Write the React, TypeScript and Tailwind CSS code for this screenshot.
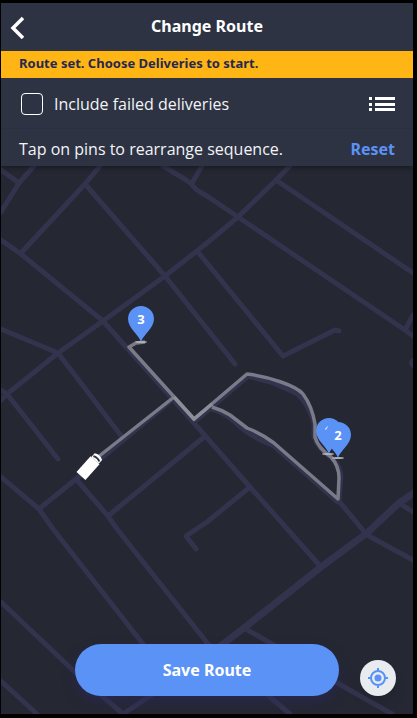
import React from "react";

const minorRoads = [
  "M1 170 19 183",
  "M34 166 19 183 1 212",
  "M100 166 85 184 21 253",
  "M1 240 21 254 103 321 194 423 250 487 290 532 321 567",
  "M85 184 165 276 235 364",
  "M198 252 283 356 335 330 339 331",
  "M163 166 186 180Q190 182 193 186T200 192L210 198 238 217 405 330 413 336",
  "M202 166 192 183",
  "M290 166 276 180 238 217 207 243 165 276 103 321 58 353 7 394 1 400",
  "M276 180 413 273",
  "M413 315 405 330",
  "M1 329 58 353 122 437",
  "M1 390 7 394 58 459",
  "M1 477 39 509 53 529 143 644",
  "M174 398 76 479 39 509",
  "M76 479 108 516 117 529 208 644 290 714",
  "M108 516 204 437",
  "M1 602 76 673 123 714 153 694 219 646",
  "M1 681 37 714",
  "M244 628 272 644 339 684 392 714",
  "M338 500 367 535 413 560",
  "M250 487 207 522 186 536 196 549",
  "M399 503 413 512",
  "M194 422 248 376 271 382 296 393Q308 402 314 423V437Q318 449 333 459 340 467 341 476L339 500",
  "M212 409Q226 413 237 424T274 446L338 502",
];

const routeLine =
  "M145 342 136 343 129 347 194 419 247 374Q264 376 281 382T303 394Q312 406 315 424V437Q318 448 331 457 339 466 339 478L338 499 274 443Q262 434 247 428L230 415Q222 410 212 407";

function Pin({ x, y, label }: { x: number; y: number; label: string }) {
  return (
    <g transform={`translate(${x} ${y})`}>
      <ellipse cx="0" cy="0" rx="6" ry="1" fill="#b0b1b8" />
      <path
        d="M0 0C-2-7-13-14-13-23A13 13 0 0 1 13-23C13-14 2-7 0 0Z"
        fill="#5b92f5"
      />
      <text
        y="-18"
        textAnchor="middle"
        className="fill-white font-['Noto_Sans',sans-serif] text-[13px] font-bold"
      >
        {label}
      </text>
    </g>
  );
}

function RouteMap() {
  return (
    <svg
      className="block h-auto w-full"
      viewBox="1 166 412 548"
      role="img"
      aria-label="Delivery route map"
    >
      <g
        fill="none"
        stroke="#33334d"
        strokeWidth="5"
        strokeLinecap="round"
        strokeLinejoin="round"
      >
        {minorRoads.map((d) => (
          <path key={d} d={d} />
        ))}
        <path d="M219 647 244 628 321 567 367 533 399 503 414 493" strokeWidth="7" />
      </g>
      <circle cx="414" cy="363" r="5" fill="#33334d" />
      <path d={routeLine} fill="none" stroke="#7a7a88" strokeWidth="3.5" strokeLinejoin="round" />
      <path d="M174 397 98 457" stroke="#7a7a88" strokeWidth="3.5" />
      <path d="M174 397 194 419 212 404" fill="none" stroke="#8e8e99" strokeWidth="3.5" />

      <g transform="translate(89 467) rotate(42)">
        <path d="M-6-9H6V12H-6Z" fill="#fff" />
        <path d="M-5-9V-14Q0-17 5-14V-9Z" fill="#fff" />
        <path d="M-4-11Q0-13 4-11" fill="none" stroke="#2d3343" strokeWidth="2" />
      </g>

      <Pin x={141} y={342} label="3" />
      <g>
        <ellipse cx="328" cy="454" rx="6" ry="1" fill="#b0b1b8" />
        <path
          d="M329 454C327 447 316 440 316 431A13 13 0 0 1 342 431C342 440 331 447 329 454Z"
          fill="#5b92f5"
        />
        <path d="M325 429 328 426V429L327 431Z" fill="#fff" />
      </g>
      <Pin x={338} y={458} label="2" />
    </svg>
  );
}

export default function App() {
  return (
    <div className="bg-black pt-[3px] pr-1 pb-1 pl-px font-['Noto_Sans',sans-serif] text-white">
      <main className="bg-[#252733]">
        <div className="relative bg-[#2d3343] shadow-[0_2px_5px_rgba(0,0,0,0.35)]">
          <header className="grid h-12 grid-cols-[48px_1fr_48px] items-center">
            <button type="button" aria-label="Back" className="flex h-12 items-center pl-2">
              <svg width="18" height="24" viewBox="0 0 18 24" fill="none" stroke="#fff" strokeWidth="3.5">
                <path d="M14 3 4 13 14 23" />
              </svg>
            </button>
            <h1 className="pb-0.5 text-center text-base font-bold">Change Route</h1>
          </header>
          <p className="h-[27px] bg-[#ffb514] px-[18px] text-[13px] leading-6 font-bold text-[#28284f]">
            Route set. Choose Deliveries to start.
          </p>
          <div className="flex h-[51px] items-center justify-between border-b border-[#2b3040] px-[18px] pt-0.5">
            <label className="flex items-center gap-[11px] pl-0.5 font-['Open_Sans',sans-serif] text-base text-gray-100">
              <input
                type="checkbox"
                className="size-[22px] appearance-none rounded border border-white checked:bg-[#5b92f5]"
              />
              Include failed deliveries
            </label>
            <button type="button" aria-label="Show list">
              <svg width="26" height="14" viewBox="0 0 26 14" fill="#fff">
                <path d="M0 0h3v3H0zM6 0h20v3H6zM0 6h3v3H0zM6 6h20v3H6zM0 11h3v3H0zM6 11h20v3H6z" />
              </svg>
            </button>
          </div>
          <div className="flex h-[37px] items-center justify-between px-[18px] pt-0.5 text-base">
            <p className="font-['Open_Sans',sans-serif] text-gray-100">
              Tap on pins to rearrange sequence.
            </p>
            <button type="button" className="font-bold text-[#5b92f5]">
              Reset
            </button>
          </div>
        </div>

        <section className="grid">
          <div className="col-start-1 row-start-1">
            <RouteMap />
          </div>
          <div className="relative col-start-1 row-start-1 grid grid-cols-[1fr_264px_1fr] items-end self-end pb-[18px]">
            <button
              type="button"
              className="col-start-2 h-[52px] rounded-full bg-[#5b92f5] text-base font-bold shadow-[0_6px_12px_rgba(40,40,90,0.6)]"
            >
              Save Route
            </button>
            <button
              type="button"
              aria-label="Center on my location"
              className="mr-[17px] flex size-9 items-center justify-center justify-self-end rounded-full bg-[#e8ecef] shadow-lg"
            >
              <svg width="20" height="20" viewBox="0 0 20 20" fill="none" stroke="#5b92f5" strokeWidth="2">
                <circle cx="10" cy="10" r="7" />
                <circle cx="10" cy="10" r="3.5" fill="#5b92f5" stroke="none" />
                <path d="M10 0v3M10 17v3M0 10h3M17 10h3" />
              </svg>
            </button>
          </div>
        </section>
      </main>
    </div>
  );
}
